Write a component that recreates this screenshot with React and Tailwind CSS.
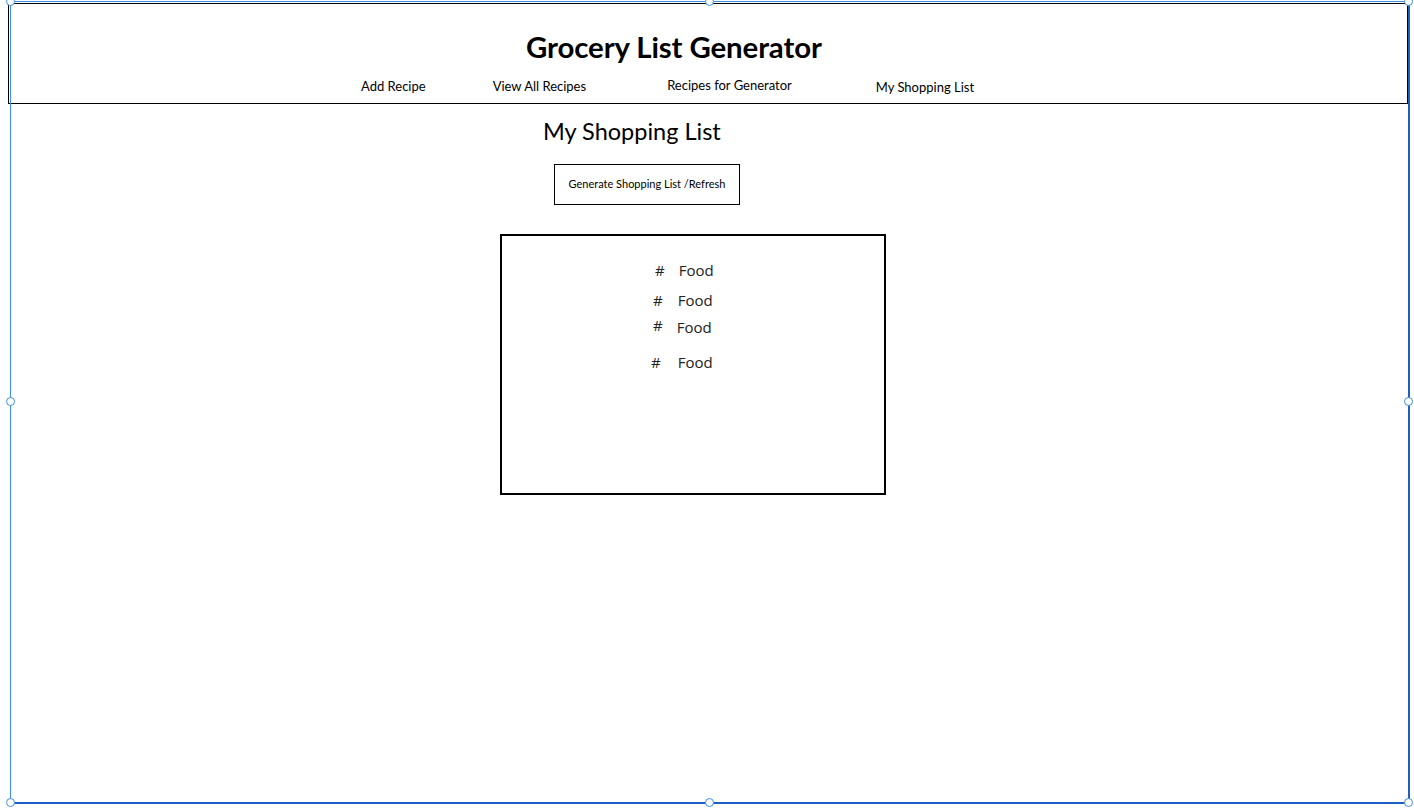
const foods = [
  { pad: "pl-[153px]", gap: "gap-[14px]", mt: "mt-[24px]" },
  { pad: "pl-[151px]", gap: "gap-[15px]", mt: "mt-[10px]" },
  { pad: "pl-[151px]", gap: "gap-[14px]", mt: "mt-[7px]" },
  { pad: "pl-[149px]", gap: "gap-[17px]", mt: "mt-[15px]" },
];

function Handle({ pos }) {
  return (
    <div
      className={`absolute w-[9px] h-[9px] rounded-full bg-white border border-[#3b8fe8] ${pos}`}
    />
  );
}

export default function App() {
  return (
    <div
      className="relative w-[1414px] h-[808px] bg-white overflow-hidden text-black"
      style={{ fontFamily: "Lato, 'Noto Sans', sans-serif" }}
    >
      {/* header */}
      <div className="ml-[8px] mt-[3px] w-[1400px] h-[101px] border border-black flex flex-col">
        <h1 className="mt-[25px] ml-[517px] text-[29.4px] leading-[36px] font-bold tracking-[-0.1px]">
          Grocery List Generator
        </h1>
        <div className="w-full flex text-[13px] leading-[18px] mt-[10px]">
          <span className="ml-[352px] mt-[2px]">Add Recipe</span>
          <span className="ml-[67px] mt-[2px]">View All Recipes</span>
          <span className="ml-[81px] mt-[1px]">Recipes for Generator</span>
          <span className="ml-[84px] mt-[3px]">My Shopping List</span>
        </div>
      </div>

      {/* page */}
      <div className="flex flex-col">
        <h2 className="ml-[543px] mt-[13px] text-[23.5px] leading-[29px] font-normal">
          My Shopping List
        </h2>
        <button className="ml-[554px] mt-[18px] w-[186px] h-[41px] border border-black bg-white text-[11px] text-center">
          Generate Shopping List /Refresh
        </button>
        <div
          className="ml-[500px] mt-[29px] w-[386px] h-[261px] border-2 border-black flex flex-col"
          style={{ fontFamily: "'Open Sans', 'Noto Sans', sans-serif" }}
        >
          {foods.map((f, i) => (
            <div key={i} className={`flex items-center ${f.pad} ${f.mt} ${f.gap} text-[15px] leading-[20px] text-[#222]`}>
              <span className={i === 2 ? "-mt-[4px]" : ""}>#</span>
              <span>Food</span>
            </div>
          ))}
        </div>
      </div>

      {/* selection frame overlay */}
      <div className="absolute left-[10px] top-[1px] w-[1400px] h-[803px] border-l border-t border-r-2 border-b-2 border-l-[#3b8fe8] border-t-[#3b8fe8] border-r-[#1c5fc4] border-b-[#1c5fc4] pointer-events-none" />
      <Handle pos="left-[6px] top-[-3px]" />
      <Handle pos="left-[705px] top-[-3px]" />
      <Handle pos="left-[1404px] top-[-3px]" />
      <Handle pos="left-[6px] top-[397px]" />
      <Handle pos="left-[1404px] top-[397px]" />
      <Handle pos="left-[6px] top-[798px]" />
      <Handle pos="left-[705px] top-[798px]" />
      <Handle pos="left-[1404px] top-[798px]" />
    </div>
  );
}
